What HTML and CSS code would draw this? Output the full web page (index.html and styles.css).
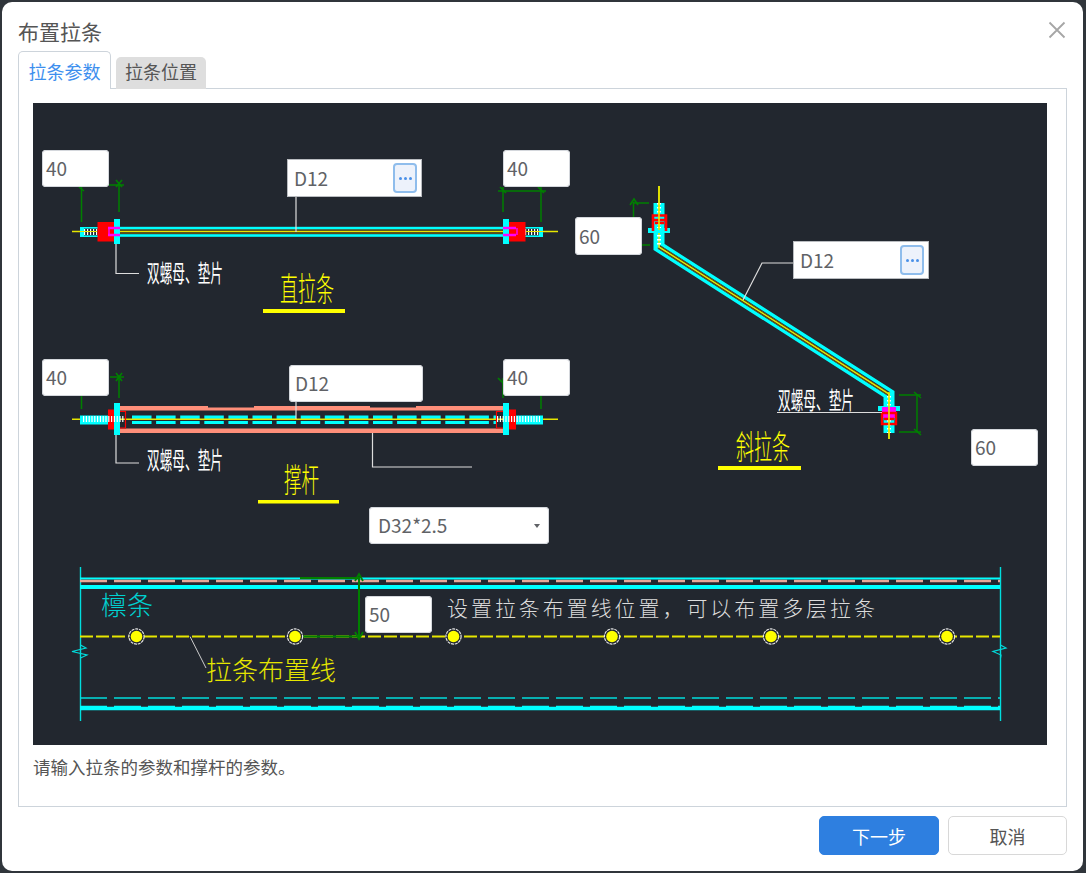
FILE: index.html
```html
<!DOCTYPE html>
<html lang="zh-CN">
<head>
<meta charset="utf-8">
<title>布置拉条</title>
<link rel="stylesheet" href="styles.css">
</head>
<body>
<div class="dialog">
  <header class="head">
    <h1 class="title">布置拉条</h1>
    <button class="close" aria-label="关闭">
      <svg width="18" height="18" viewBox="0 0 18 18"><path d="M1.5 1.5 L16.5 16.5 M16.5 1.5 L1.5 16.5" stroke="#a6a6a6" stroke-width="1.8" fill="none"/></svg>
    </button>
  </header>
  <nav class="tabs">
    <div class="tab active">拉条参数</div>
    <div class="tab">拉条位置</div>
  </nav>
  <section class="panel">
    <div class="canvas">
      <svg class="drawing" width="1014" height="642" viewBox="33 103 1014 642" fill="none">
        <!-- straight rod -->
        <g>
          <rect x="119" y="226.8" width="385" height="10" fill="#00ffff"/>
          <rect x="119" y="229.4" width="385" height="4.8" fill="#22272f"/>
          <path d="M72 231.5H558" stroke="#e6e600" stroke-width="1.6"/>
          <path d="M504 229.8H119M504 233.4H119" stroke="#8a6a10" stroke-width=".6"/>
          <rect x="80" y="227" width="18" height="10" fill="#00ffff"/>
          <rect x="84" y="228.6" width="14" height="6.8" fill="#22272f"/>
          <path d="M84 232H98" stroke="#fff" stroke-width="6" stroke-dasharray="1.2 1.8"/>
          <rect x="525" y="227" width="18" height="10" fill="#00ffff"/>
          <rect x="525" y="228.6" width="14" height="6.8" fill="#22272f"/>
          <path d="M525 232H540" stroke="#fff" stroke-width="6" stroke-dasharray="1.2 1.8"/>
          <path d="M72 231.5H97M526 231.5H558" stroke="#e6e600" stroke-width="1.2"/>
          <rect x="97.5" y="222" width="20" height="19.5" fill="#ff0000"/>
          <rect x="505.5" y="222" width="20" height="19.5" fill="#ff0000"/>
          <rect x="114" y="219" width="6" height="25" fill="#00ffff"/>
          <rect x="503" y="219" width="6" height="25" fill="#00ffff"/>
          <path d="M108 228H120M108 235H120M503 228H516M503 235H516" stroke="#ff00ff" stroke-width="2.4"/>
          <path d="M109 228V235M517 228V235" stroke="#ff00ff" stroke-width="1.4"/>
          <path d="M81.5 187V222M119 182V212M109 185H124M503 187V212M541 187V222M498 191H546" stroke="#008000" stroke-width="1.5"/>
          <path d="M116 180L122 187M122 180L116 187M79 187L84 191M500 187L506 193M538 187L544 193" stroke="#008000" stroke-width="1.6"/>
          <path d="M296 197V232M116 244V273.5H139" stroke="#dddddd" stroke-width="1.2"/>
        </g>
        <text class="cad-white" x="147" y="282" textLength="76" lengthAdjust="spacingAndGlyphs">双螺母、垫片</text>
        <text class="cad-title" x="280" y="301" textLength="54" lengthAdjust="spacingAndGlyphs">直拉条</text>
        <rect x="263" y="309" width="82" height="4" fill="#ffff00"/>

        <!-- strut -->
        <g>
          <rect x="119" y="406" width="385" height="4.5" fill="#ff8f7a"/>
          <rect x="119" y="428.5" width="385" height="4.5" fill="#ff8f7a"/>
          <rect x="208" y="406" width="46" height="1.5" fill="#22272f"/>
          <rect x="370" y="406" width="46" height="1.5" fill="#22272f"/>
          <path d="M132 417.3H496" stroke="#00ffff" stroke-width="3.6" stroke-dasharray="19.5 4.6"/>
          <path d="M132 422.6H496" stroke="#00ffff" stroke-width="3" stroke-dasharray="19.5 4.6"/>
          <path d="M72 419.3H558" stroke="#e6e600" stroke-width="1.6"/>
          <rect x="80" y="415.5" width="38" height="9" fill="#00ffff"/>
          <rect x="503" y="415.5" width="40" height="9" fill="#00ffff"/>
          <rect x="108" y="409.5" width="10" height="20" fill="#ff0000"/>
          <rect x="506" y="409.5" width="10" height="20" fill="#ff0000"/>
          <path d="M118 411.5H125.5V428H118M503 411.5H496.5V428H503" stroke="#ff0000" stroke-width="1.2"/>
          <rect x="114" y="403" width="6" height="32" fill="#00ffff"/>
          <rect x="503" y="403" width="6" height="32" fill="#00ffff"/>
          <path d="M83 419H124M497 419H540" stroke="#fff" stroke-width="6" stroke-dasharray="1.2 1.6"/>
          <path d="M81.5 395V409M119 375V398M110 377H124M541 395V409M503 378V398" stroke="#008000" stroke-width="1.5"/>
          <path d="M116 373L122 381M122 373L116 381M498 378L504 384" stroke="#008000" stroke-width="1.6"/>
          <path d="M296 401V419M116 435V463H139M372.5 433V467H472" stroke="#dddddd" stroke-width="1.2"/>
        </g>
        <text class="cad-white" x="147" y="469" textLength="76" lengthAdjust="spacingAndGlyphs">双螺母、垫片</text>
        <text class="cad-title" x="284" y="492" textLength="35" lengthAdjust="spacingAndGlyphs">撑杆</text>
        <rect x="258" y="500" width="81" height="3.5" fill="#ffff00"/>

        <!-- slanted rod -->
        <g>
          <path d="M659 203V247L889 394V433" stroke="#00ffff" stroke-width="11" stroke-linejoin="miter"/>
          <path d="M659 247L889 394" stroke="#22272f" stroke-width="4.4"/>
          <path d="M659 186V247L889 394V439" stroke="#e6e600" stroke-width="1.6"/>
          <path d="M660.6 246L887.4 391.8M657.4 248L889 396" stroke="#8a6a10" stroke-width=".7"/>
          <path d="M659 203V247M889 396V433" stroke="#fff" stroke-width="4" stroke-dasharray="1.5 2.5"/>
          <rect x="648" y="228" width="22" height="5" fill="#00ffff"/>
          <path d="M653 231V215.5H666V231M653 220H666M655 223H664" stroke="#ff0000" stroke-width="2.6"/>
          <path d="M659 186V230" stroke="#e6e600" stroke-width="1.6"/>
          <rect x="878" y="406" width="22" height="5" fill="#00ffff"/>
          <rect x="882" y="407" width="14" height="11" fill="#ff00ff"/>
          <path d="M882 413H896V424H882ZM884 419H894" stroke="#ff0000" stroke-width="2.4"/>
          <path d="M889 392V439" stroke="#e6e600" stroke-width="1.6"/>
          <path d="M633.5 202V217M634 203H649M642 245H650M899 395H921M899 432H921M917 395V432" stroke="#008000" stroke-width="1.5"/>
          <path d="M630 205L634 199L638 205M914 392L921 398M914 429L921 435" stroke="#008000" stroke-width="1.6"/>
          <path d="M743 300L762 263H793M777 412.5H882" stroke="#dddddd" stroke-width="1.2"/>
        </g>
        <text class="cad-white" x="778" y="409" textLength="76" lengthAdjust="spacingAndGlyphs">双螺母、垫片</text>
        <text class="cad-title" x="736" y="459" textLength="54" lengthAdjust="spacingAndGlyphs">斜拉条</text>
        <rect x="718" y="466" width="83" height="4" fill="#ffff00"/>

        <!-- purlin -->
        <g>
          <path d="M80.5 567V721M1000.5 567V721" stroke="#00dddd" stroke-width="1.4"/>
          <path d="M80 578.5H1000" stroke="#00ffff" stroke-width="2"/>
          <path d="M80 581H1000" stroke="#e8a898" stroke-width="2.4" stroke-dasharray="27 7"/>
          <path d="M80 587H1000" stroke="#00ffff" stroke-width="4"/>
          <path d="M80 698H1000" stroke="#00dddd" stroke-width="1.4" stroke-dasharray="27 7"/>
          <path d="M80 706.4H1000" stroke="#00ffff" stroke-width="1.4" stroke-dasharray="27 7"/>
          <path d="M80 708.5H1000" stroke="#00ffff" stroke-width="3.4"/>
          <path d="M80.5 645L86 648L72 651.5L87 655L80.5 658M1000.5 645L1006 648L993 651.5L1001 655L1000.5 658" stroke="#00dddd" stroke-width="1.2"/>
          <path d="M80 636.5H1000" stroke="#e6e600" stroke-width="1.8" stroke-dasharray="13 3"/>
          <path d="M300 578H359V636.5H303" stroke="#008000" stroke-width="2"/>
          <path d="M355 581L359 574L363 581M355 632L359 639L363 632" stroke="#008000" stroke-width="1.8"/>
          <path d="M190 636.5L206 668" stroke="#cccccc" stroke-width="1"/>
        </g>
        <g fill="#22272f" stroke="#e6e6e6" stroke-width="1.2" stroke-dasharray="3 .8">
          <circle cx="136.5" cy="636.5" r="7.6"/>
          <circle cx="295" cy="636.5" r="7.6"/>
          <circle cx="453.5" cy="636.5" r="7.6"/>
          <circle cx="612" cy="636.5" r="7.6"/>
          <circle cx="771" cy="636.5" r="7.6"/>
          <circle cx="947" cy="636.5" r="7.6"/>
        </g>
        <g fill="#ffff00">
          <circle cx="136.5" cy="636.5" r="5.8"/>
          <circle cx="295" cy="636.5" r="5.8"/>
          <circle cx="453.5" cy="636.5" r="5.8"/>
          <circle cx="612" cy="636.5" r="5.8"/>
          <circle cx="771" cy="636.5" r="5.8"/>
          <circle cx="947" cy="636.5" r="5.8"/>
        </g>
        <text class="cad-label cad-cyan" x="101" y="615">檩条</text>
        <text class="cad-label cad-yellow" x="206" y="680">拉条布置线</text>
        <text class="cad-note" x="447" y="616" textLength="428" lengthAdjust="spacing">设置拉条布置线位置，可以布置多层拉条</text>
      </svg>

      <div class="field num f-a">40</div>
      <div class="field num f-b">40</div>
      <div class="field num f-c">40</div>
      <div class="field num f-d">40</div>
      <div class="field num f-e">60</div>
      <div class="field num f-f">60</div>
      <div class="field num f-g">50</div>
      <div class="field rod f-h">D12<span class="more"><i></i><i></i><i></i></span></div>
      <div class="field rod f-i">D12<span class="more"><i></i><i></i><i></i></span></div>
      <div class="field num f-j">D12</div>
      <div class="field num f-k">D32*2.5<span class="caret"></span></div>
    </div>
    <p class="hint">请输入拉条的参数和撑杆的参数。</p>
  </section>
  <footer class="foot">
    <button class="btn primary">下一步</button>
    <button class="btn cancel">取消</button>
  </footer>
</div>
</body>
</html>
```

FILE: styles.css
```css
* { box-sizing: border-box; }
html, body { margin: 0; height: 100%; }
body {
  width: 1086px;
  height: 873px;
  overflow: hidden;
  background: #30353b;
  padding: 2px 3px 2px 2px;
  font-family: "Noto Sans CJK SC", "Noto Sans", sans-serif;
}
.dialog {
  width: 1081px;
  height: 869px;
  background: #fff;
  border-radius: 10px;
  display: flex;
  flex-direction: column;
  padding: 0 16px;
}
.head {
  height: 49px;
  flex: none;
  display: flex;
  align-items: center;
  justify-content: space-between;
  padding-top: 8px;
}
.title {
  margin: 0;
  font-size: 21px;
  font-weight: 400;
  color: #555;
  line-height: 40px;
}
.close {
  border: 0;
  background: none;
  padding: 0;
  margin-right: 1px;
  width: 18px;
  height: 18px;
  margin-top: -1px;
}
.close svg { display: block; }
.tabs {
  flex: none;
  display: flex;
  align-items: flex-end;
  gap: 5px;
  height: 38px;
  margin-bottom: -1px;
  position: relative;
}
.tab {
  width: 90px;
  height: 32px;
  background: #dedede;
  color: #555;
  font-size: 18px;
  line-height: 29px;
  text-align: center;
  border-radius: 5px 5px 0 0;
}
.tab.active {
  width: 93px;
  height: 38px;
  line-height: 38px;
  background: #fff;
  color: #3d8fee;
  border: 1px solid #cdd4db;
  border-bottom: 0;
  z-index: 1;
}
.panel {
  flex: none;
  height: 719px;
  width: 1049px;
  border: 1px solid #cdd4db;
  padding: 14px 14px 0;
}
.canvas {
  position: relative;
  width: 1014px;
  height: 642px;
  background: #22272f;
}
.drawing { display: block; }
.cad-white, .cad-title, .cad-label, .cad-note {
  font-family: "Noto Sans CJK SC", sans-serif;
}
.cad-white { fill: #fff; font-size: 24px; font-weight: 400; }
.cad-title { fill: #ffff00; font-size: 33px; font-weight: 300; }
.cad-label { font-size: 26px; font-weight: 300; }
.cad-cyan { fill: #00d0d0; }
.cad-yellow { fill: #e6e600; }
.cad-note { fill: #dcdcdc; font-size: 21px; font-weight: 300; }
.field {
  position: absolute;
  display: flex;
  align-items: center;
  background: #fff;
  color: #606266;
  font-size: 19px;
  padding: 0 0 2px 4px;
  height: 37px;
}
.num {
  width: 67px;
  border-radius: 4px;
  box-shadow: inset 0 0 0 1px #d4d7dc;
}
.rod {
  width: 135px;
  padding: 0 0 1px 7px;
  justify-content: space-between;
  box-shadow: inset 0 0 0 1px #b9bcc0;
  height: 38px;
}
.more {
  width: 24px;
  height: 30px;
  margin: 1px 5px 0 0;
  border: 2px solid #8fbdec;
  border-radius: 4px;
  background: #edf2fb;
  display: flex;
  align-items: center;
  justify-content: center;
  gap: 2px;
}
.more i {
  width: 3px;
  height: 3px;
  border-radius: 50%;
  background: #4a90e8;
}
.caret {
  position: absolute;
  right: 9px;
  top: 17px;
  border-style: solid;
  border-width: 4px 3.5px 0;
  border-color: #606266 transparent transparent;
}
.f-a { left: 9px; top: 47px; }
.f-b { left: 470px; top: 47px; }
.f-c { left: 9px; top: 255.5px; }
.f-d { left: 470px; top: 255.5px; }
.f-e { left: 542px; top: 114px; height: 38px; }
.f-f { left: 938px; top: 326px; }
.f-g { left: 332px; top: 493px; }
.f-h { left: 254px; top: 56px; }
.f-i { left: 760px; top: 138px; width: 136px; }
.f-j { left: 256px; top: 261.5px; width: 134px; padding-left: 6px; }
.f-k { left: 336px; top: 404px; width: 180px; padding-left: 9px; }
.hint {
  margin: 10px 0 0;
  font-size: 17.5px;
  line-height: 24px;
  color: #555;
}
.foot {
  flex: 1;
  display: flex;
  justify-content: flex-end;
  gap: 9px;
  padding-top: 9px;
}
.btn {
  width: 120px;
  height: 39px;
  border: 1px solid #d8d8d8;
  border-radius: 5px;
  background: #fff;
  color: #555;
  font: inherit;
  font-size: 18px;
  padding: 0;
}
.btn.cancel { width: 119px; }
.btn.primary {
  background: #2e7fe0;
  border-color: #2e7fe0;
  color: #fff;
}
```
